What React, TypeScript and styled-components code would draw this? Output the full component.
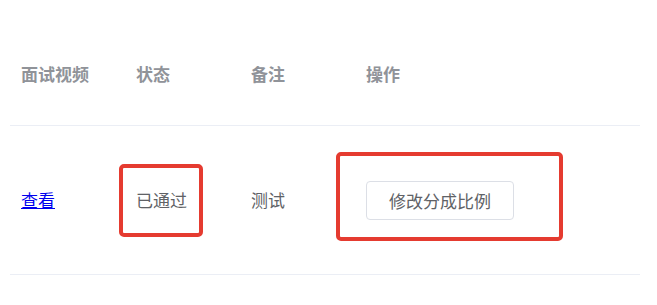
import React from 'react'
import styled, { createGlobalStyle } from 'styled-components'

const GlobalStyle = createGlobalStyle`
  body {
    margin: 0;
    background: #ffffff;
    font-family: 'Noto Sans CJK SC', 'Noto Sans', sans-serif;
  }
`

const Page = styled.div`
  width: 657px;
  height: 305px;
  padding: 22px 17px 0 10px;
  box-sizing: border-box;
`

const Row = styled.div<{ $height: number }>`
  display: grid;
  grid-template-columns: 115px 115px 115px 1fr;
  align-items: center;
  height: ${p => p.$height}px;
  border-bottom: 1px solid #ebeef5;
`

const Cell = styled.div`
  padding-left: 11px;
  font-size: 17px;
  line-height: 24px;
  color: #606266;
  white-space: nowrap;
`

const HeadCell = styled(Cell)`
  font-weight: 700;
  color: #909399;
`

const Link = styled.a`
  color: #0000ee;
  text-decoration: underline;
  cursor: pointer;
`

// red annotation frame drawn over the content
const Marked = styled.span<{ $t: number; $r: number; $b: number; $l: number }>`
  position: relative;
  display: inline-block;
  &::after {
    content: '';
    position: absolute;
    top: ${p => p.$t}px;
    right: ${p => p.$r}px;
    bottom: ${p => p.$b}px;
    left: ${p => p.$l}px;
    border: 4px solid #e53b30;
    border-radius: 5px;
    pointer-events: none;
  }
`

const Button = styled.button`
  height: 39px;
  padding: 0 22px;
  background: #ffffff;
  border: 1px solid #dcdfe6;
  border-radius: 4px;
  font-family: inherit;
  font-size: 17px;
  color: #606266;
  display: block;
`

export default function App() {
  return (
    <>
      <GlobalStyle />
      <Page>
        <Row $height={103}>
          <HeadCell>面试视频</HeadCell>
          <HeadCell>状态</HeadCell>
          <HeadCell>备注</HeadCell>
          <HeadCell>操作</HeadCell>
        </Row>
        <Row $height={148}>
          <Cell>
            <Link>查看</Link>
          </Cell>
          <Cell>
            <Marked $t={-24} $r={-16} $b={-25} $l={-17}>已通过</Marked>
          </Cell>
          <Cell>测试</Cell>
          <Cell>
            <Marked $t={-29} $r={-49} $b={-21} $l={-30}>
              <Button>修改分成比例</Button>
            </Marked>
          </Cell>
        </Row>
      </Page>
    </>
  )
}
